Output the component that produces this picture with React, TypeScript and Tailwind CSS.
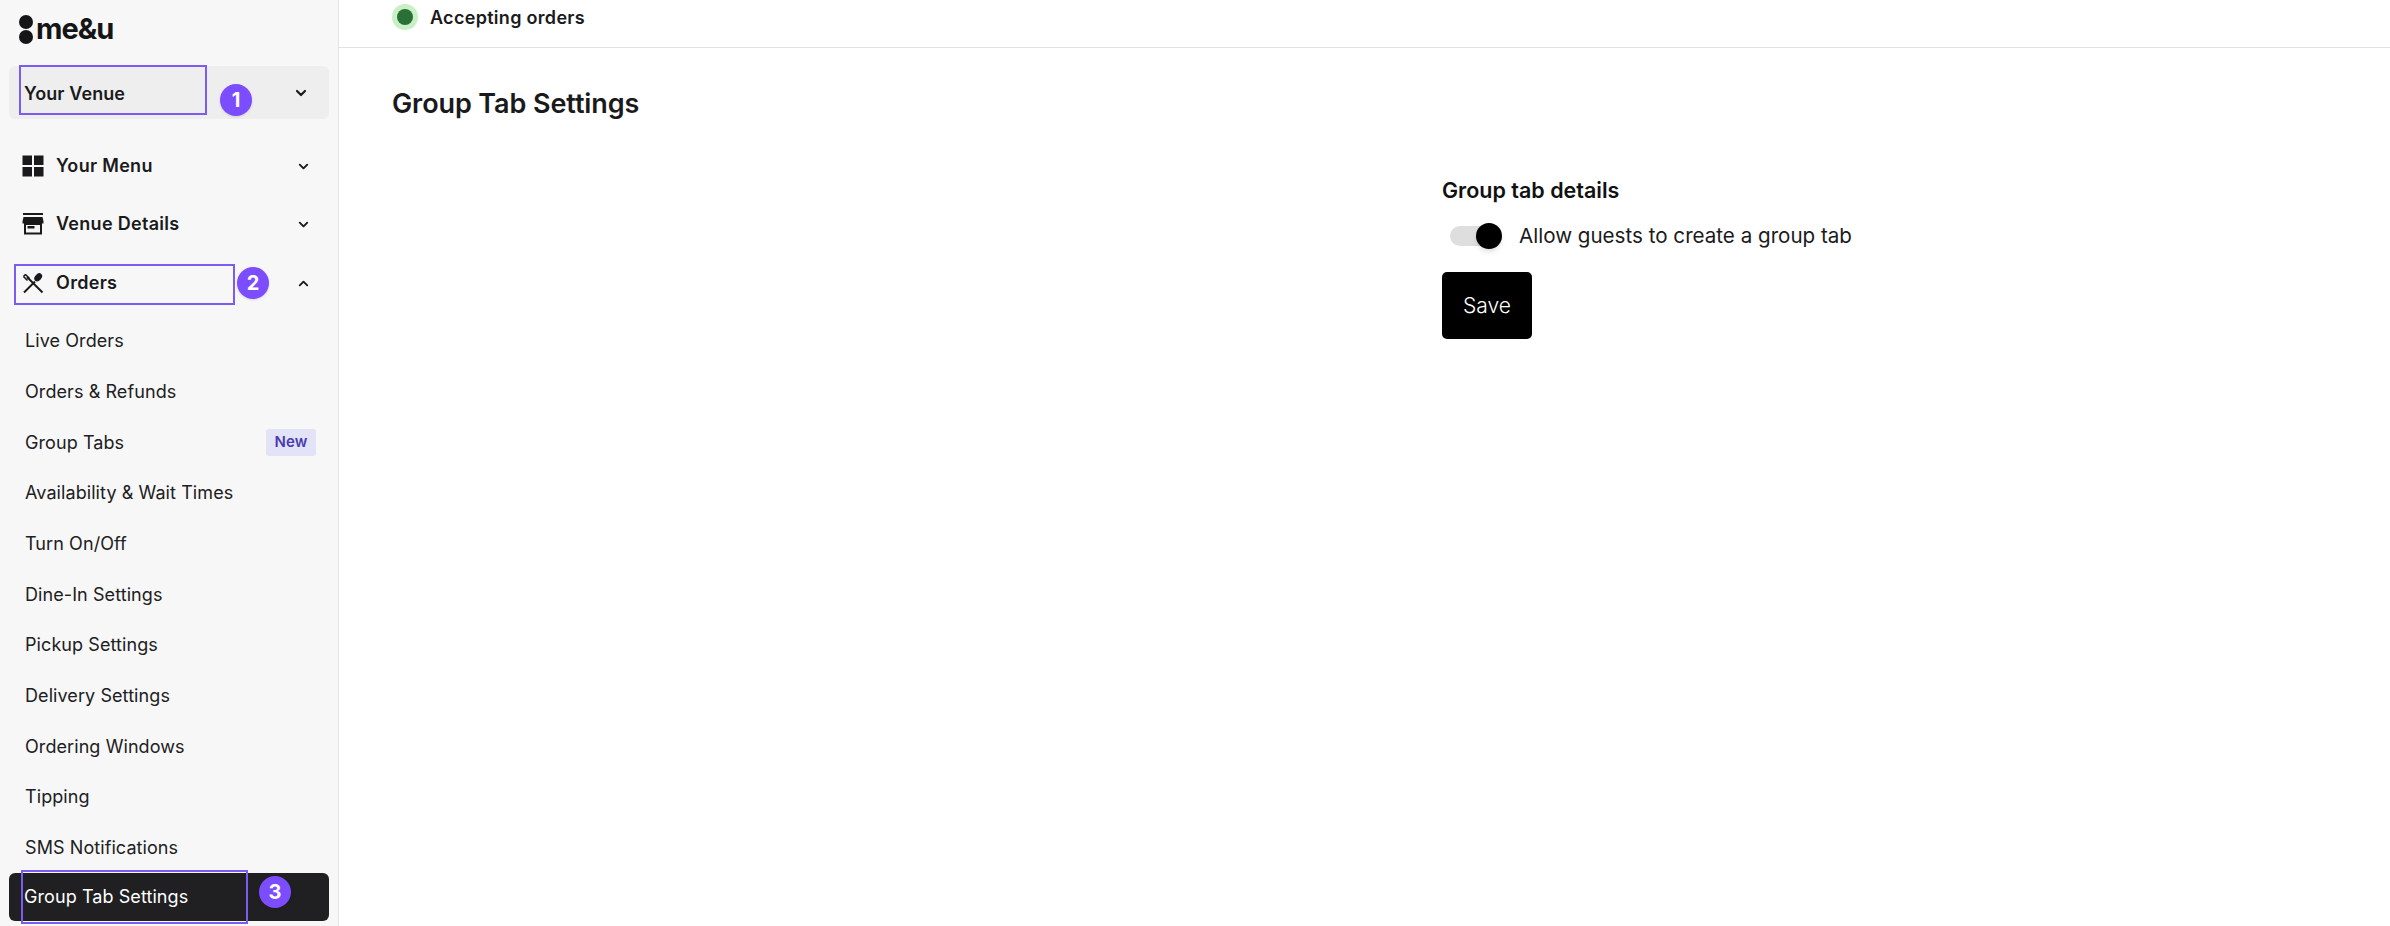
import { ChevronDown, ChevronUp } from "lucide-react";

const font = { fontFamily: "Inter, 'Noto Sans', sans-serif" };

const subItems = [
  "Live Orders",
  "Orders & Refunds",
  "Group Tabs",
  "Availability & Wait Times",
  "Turn On/Off",
  "Dine-In Settings",
  "Pickup Settings",
  "Delivery Settings",
  "Ordering Windows",
  "Tipping",
  "SMS Notifications",
];

function Badge({ n, className }: { n: number; className: string }) {
  return (
    <span
      className={
        "absolute flex h-8 w-8 items-center justify-center rounded-full bg-[#7c4dff] text-[20px] font-bold text-white shadow-sm " +
        className
      }
    >
      {n}
    </span>
  );
}

function GridIcon() {
  return (
    <svg width="22" height="22" viewBox="0 0 22 22" fill="#1a1a1c">
      <rect x="0.5" y="0.5" width="9.5" height="9.5" />
      <rect x="12" y="0.5" width="9.5" height="9.5" />
      <rect x="0.5" y="12" width="9.5" height="9.5" />
      <rect x="12" y="12" width="9.5" height="9.5" />
    </svg>
  );
}

function StoreIcon() {
  return (
    <svg width="22" height="22" viewBox="0 0 22 22" fill="#1a1a1c">
      <rect x="1" y="0" width="20" height="2" />
      <path d="M1.5 4h19l1 4.5v2H.5v-2z" />
      <path d="M2 10h18v11.500H2zM4 12v7.500h14V12z" fillRule="evenodd" />
      <rect x="5.500" y="13" width="7" height="2.500" />
    </svg>
  );
}

function CutleryIcon() {
  return (
    <svg width="22" height="22" viewBox="0 0 22 22" fill="none" stroke="#1a1a1c">
      <path d="M2 20.500 13 9.500" strokeWidth="2" />
      <ellipse cx="16.200" cy="5.300" rx="3.200" ry="4.600" fill="#1a1a1c" stroke="none" transform="rotate(42 16.200 5.300)" />
      <path d="M20.500 20.500 5 5" strokeWidth="2" />
      <path d="M1.500 4.500 5.500 8.500M3.500 2.500 7.500 6.500M1.500 4.500 3.500 2.500" strokeWidth="1.600" />
    </svg>
  );
}

function NavItem({
  icon,
  label,
  open,
  className,
}: {
  icon: React.ReactNode;
  label: string;
  open?: boolean;
  className: string;
}) {
  return (
    <div className={"flex items-center pl-[22px] pr-[27px] text-[#1a1a1c] " + className}>
      <span className="flex w-[22px] justify-center">{icon}</span>
      <span className="ml-[12px] flex-1 text-[18px] font-semibold leading-none tracking-[0.3px]">{label}</span>
      {open ? <ChevronUp size={15} strokeWidth={3} /> : <ChevronDown size={15} strokeWidth={3} />}
    </div>
  );
}

export default function App() {
  return (
    <div className="flex h-[926px] w-[2390px] overflow-hidden bg-white" style={font}>
      <aside className="relative flex h-full w-[339px] shrink-0 flex-col border-r border-[#e4e4e4] bg-[#f7f7f7]">
        <div className="flex h-[66px] items-start pl-[19px] pt-[15px]">
          <span className="flex flex-col gap-[1px] pr-[3px]">
            <span className="h-[14px] w-[14px] rounded-full bg-[#151517]" />
            <span className="h-[14px] w-[14px] rounded-full bg-[#151517]" />
          </span>
          <span className="mt-[-4px] text-[29px] font-bold leading-[36px] tracking-[-1px] text-[#151517]">me&amp;u</span>
        </div>

        <div className="mx-[9px] flex h-[53px] items-center justify-between rounded-[6px] bg-[#eeeeee] pl-[15px] pr-[20px] text-[#1a1a1c]">
          <span className="pt-[2px] text-[18px] font-semibold tracking-[0.1px]">Your Venue</span>
          <ChevronDown size={16} strokeWidth={3.200} />
        </div>

        <NavItem icon={<GridIcon />} label="Your Menu" className="mt-[18px] h-[58px]" />
        <NavItem icon={<StoreIcon />} label="Venue Details" className="h-[58px]" />
        <NavItem icon={<CutleryIcon />} label="Orders" open className="h-[60px]" />

        <div className="mt-[2.500px] flex flex-col">
          {subItems.map((item) => (
            <div key={item} className="flex h-[50.670px] items-center justify-between pl-[25px] pr-[22px] text-[18px] tracking-[0.08px] text-[#202022]">
              <span>{item}</span>
              {item === "Group Tabs" && (
                <span className="flex h-[27px] w-[50px] items-center justify-center rounded-[3px] bg-[#e3e3f8] text-[15px] font-semibold text-[#4a3bb0]">
                  New
                </span>
              )}
            </div>
          ))}
        </div>

        <div className="mx-[9px] flex h-[48px] items-center rounded-[6px] bg-[#202022] pl-[15px] text-[18px] tracking-[0.08px] text-white">
          Group Tab Settings
        </div>

        <div className="absolute left-[19px] top-[65px] h-[50px] w-[188px] border-2 border-[#7c5cf0]" />
        <Badge n={1} className="left-[220px] top-[84px]" />
        <div className="absolute left-[14px] top-[264px] h-[41px] w-[221px] border-2 border-[#7c5cf0]" />
        <Badge n={2} className="left-[237px] top-[267px]" />
        <div className="absolute left-[21px] top-[870px] h-[54px] w-[227px] border-2 border-[#7c5cf0]" />
        <Badge n={3} className="left-[259px] top-[876px]" />
      </aside>

      <main className="flex min-w-0 flex-1 flex-col">
        <header className="flex h-[48px] items-start border-b border-[#e2e2e2] pl-[53px] pt-[4px]">
          <span className="flex h-[26px] w-[26px] items-center justify-center rounded-full bg-[#c9efc6]">
            <span className="h-[16px] w-[16px] rounded-full bg-[#2a6f35]" />
          </span>
          <span className="ml-[12px] pt-[1px] text-[18px] font-semibold leading-[26px] tracking-[0.3px] text-[#1a1a1c]">Accepting orders</span>
        </header>

        <h1 className="ml-[53px] mt-[38px] text-[27px] font-semibold leading-[36px] tracking-[-0.1px] text-[#1a1a1c]">Group Tab Settings</h1>

        <div className="mt-[54px] flex">
          <div className="w-[1103px] shrink-0" />
          <section className="flex flex-col items-start">
            <h2 className="text-[21.500px] font-semibold leading-[28px] text-[#111]">Group tab details</h2>
            <div className="mt-[18px] flex items-center">
              <span className="relative ml-[8px] flex h-[20px] w-[52px] items-center">
                <span className="h-[20px] w-[40px] rounded-full bg-[#dedede]" />
                <span className="absolute right-0 top-[-3px] h-[26px] w-[26px] rounded-full bg-black shadow-md" />
              </span>
              <span className="ml-[17px] text-[20.600px] leading-[28px] text-[#1a1a1c]">Allow guests to create a group tab</span>
            </div>
            <button className="mt-[22px] flex h-[67px] w-[90px] items-center justify-center rounded-[5px] bg-black text-[21px] font-light text-white">
              Save
            </button>
          </section>
        </div>
      </main>
    </div>
  );
}
